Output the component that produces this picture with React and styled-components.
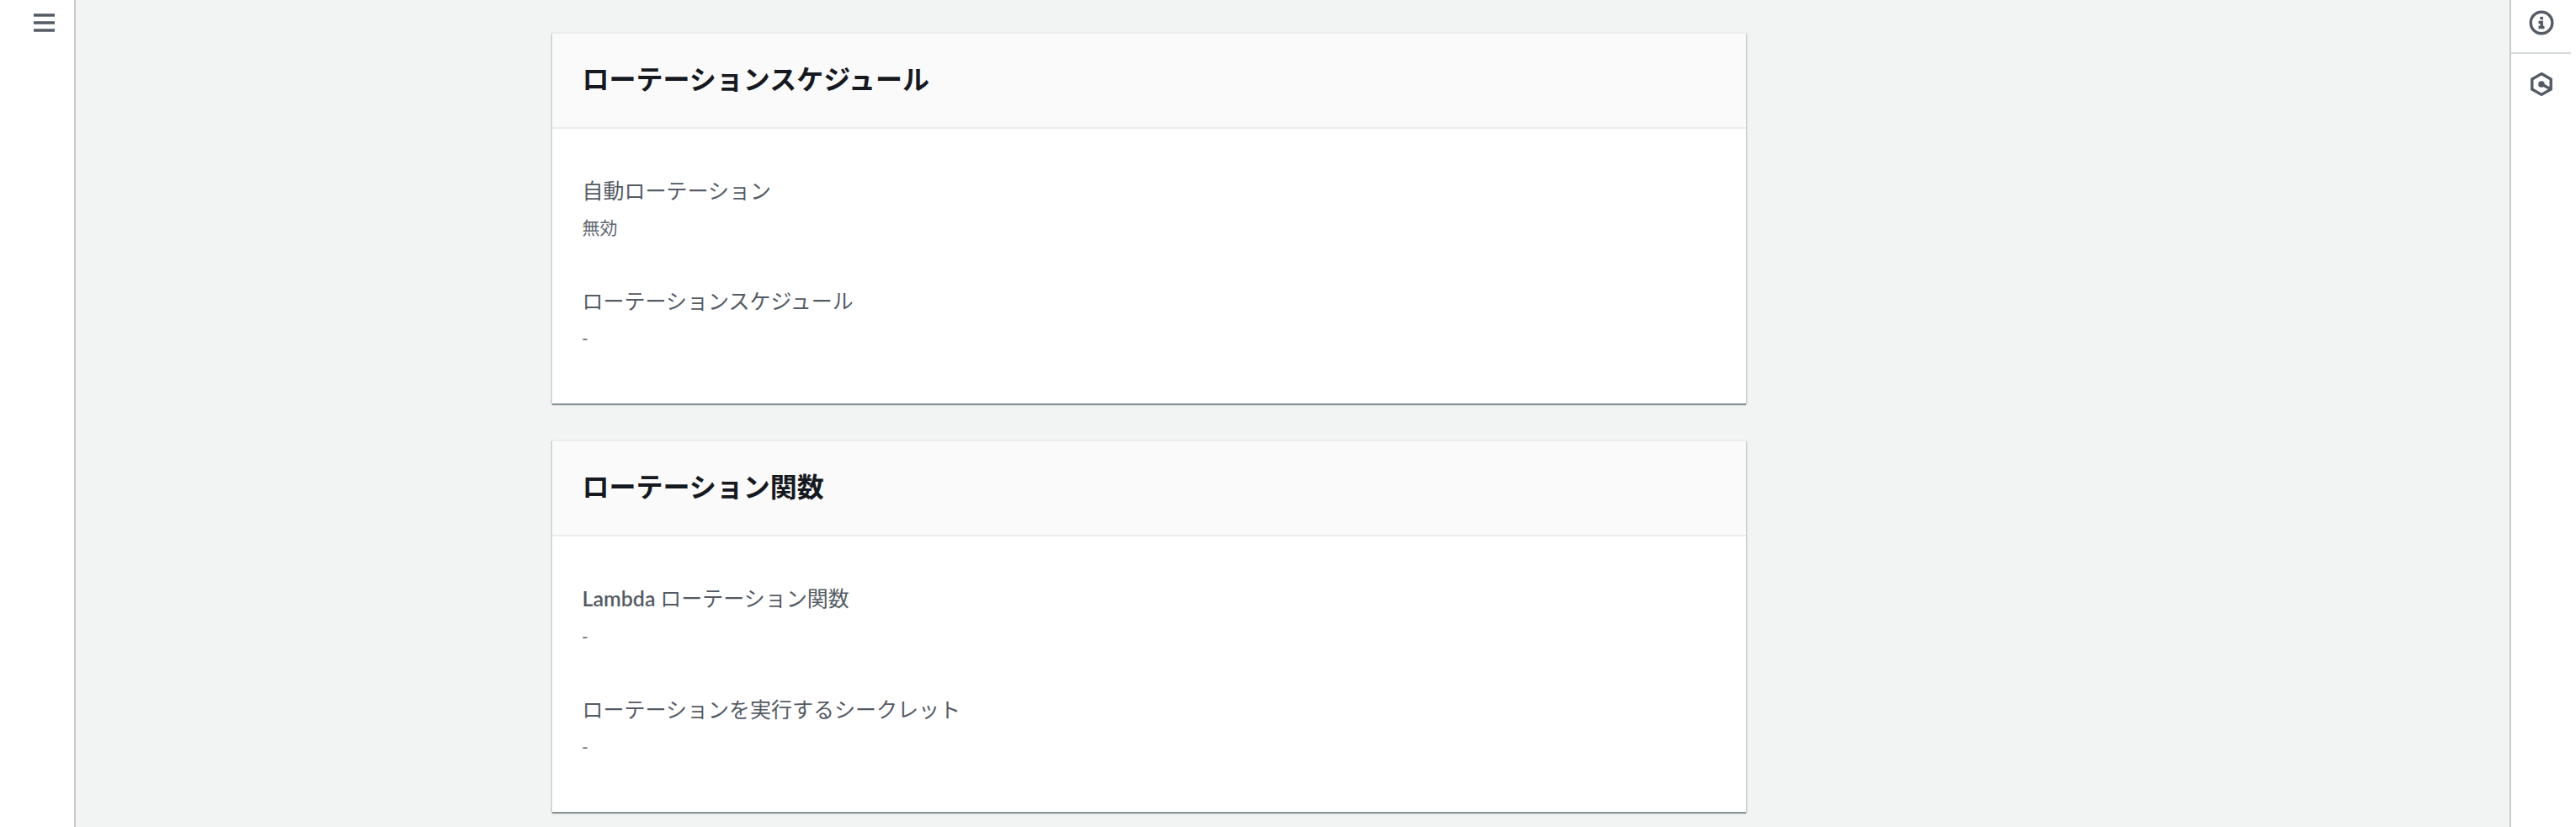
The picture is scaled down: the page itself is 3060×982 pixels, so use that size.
import React from "react";
import styled, { createGlobalStyle } from "styled-components";

const GlobalStyle = createGlobalStyle`
  *, *::before, *::after { box-sizing: border-box; }
  body {
    margin: 0;
    background: #f2f3f3;
    color: #545b64;
    font-family: "Open Sans", "Noto Sans CJK JP", sans-serif;
  }
`;

const Layout = styled.div`
  display: flex;
  min-height: 100vh;
`;

const NavRail = styled.nav`
  flex: none;
  width: 90px;
  padding: 4px 13px 0 0;
  display: flex;
  justify-content: flex-end;
  align-items: flex-start;
  background: #fff;
  border-right: 2px solid #c6cbcb;
`;

const ToolsRail = styled.aside`
  flex: none;
  width: 79px;
  padding-right: 6px;
  background: #fff;
  border-left: 2px solid #c6cbcb;
`;

const IconButton = styled.button`
  display: flex;
  align-items: center;
  justify-content: center;
  width: 45px;
  height: 45px;
  padding: 0;
  border: 0;
  background: none;
  color: #545b64;
  cursor: pointer;
`;

const ToolButton = styled(IconButton)`
  width: 100%;
  height: ${(p) => (p.$first ? 64 : 72)}px;
  padding-bottom: ${(p) => (p.$first ? 8 : 0)}px;
  border-bottom: ${(p) => (p.$first ? "2px solid #d5dbdb" : "0")};
`;

const Main = styled.main`
  flex: 1;
  padding: 39px 22px 18px 20px;
`;

const Content = styled.div`
  max-width: 1758px;
  margin: 0 auto;
  padding-right: 340px;
  display: flex;
  flex-direction: column;
  gap: 44px;
`;

const Card = styled.section`
  background: #fff;
  border-top: 1px solid #eaeded;
  box-shadow: 0 2px 1px #879596, 1px 1px 2px #c3c8ce, -1px 1px 2px #c3c8ce;
`;

const CardHeader = styled.header`
  padding: 32px 36px 39px;
  background: #fafafa;
  border-bottom: 2px solid #eaeded;
`;

const CardTitle = styled.h2`
  margin: 0;
  color: #16191f;
  font-family: "Noto Sans CJK JP", sans-serif;
  font-size: 32px;
  line-height: 40px;
  font-weight: 700;
`;

const Fields = styled.dl`
  margin: 0;
  padding: 52px 36px 60px;
  display: flex;
  flex-direction: column;
  gap: 48px;
`;

const Label = styled.dt`
  font-family: "Noto Sans CJK JP", sans-serif;
  font-size: 25px;
  line-height: 40px;
`;

const Latin = styled.span`
  font-family: Lato, sans-serif;
  font-weight: 600;
`;

const Value = styled.dd`
  margin: 7px 0 0;
  color: #5f6670;
  font-size: 21px;
  line-height: 36px;
`;

const MenuIcon = () => (
  <svg width="25" height="22" viewBox="0 0 25 22" stroke="currentColor" strokeWidth="3.6" aria-hidden="true">
    <path d="M0 2H25M0 11H25M0 20H25" />
  </svg>
);

const InfoIcon = () => (
  <svg width="30" height="30" viewBox="0 0 30 30" fill="none" stroke="currentColor" aria-hidden="true">
    <circle cx="15" cy="15" r="12.8" strokeWidth="3.4" />
    <path d="M13.3 9.6H17" strokeWidth="3.5" />
    <path d="M11.5 14.5H15.2V20.5M11.5 20.5H18.5" strokeWidth="3.5" />
  </svg>
);

const HexagonIcon = () => (
  <svg width="30" height="30" viewBox="0 0 30 30" fill="none" stroke="currentColor" strokeWidth="3.4" aria-hidden="true">
    <path d="M15 2.6L26.2 9V21L15 27.4L3.8 21V9Z" />
    <path d="M15 15L25.5 20.5" />
    <circle cx="15" cy="15" r="3.8" fill="currentColor" stroke="none" />
  </svg>
);

const cards = [
  {
    title: "ローテーションスケジュール",
    fields: [
      { label: "自動ローテーション", value: "無効" },
      { label: "ローテーションスケジュール", value: "-" },
    ],
  },
  {
    title: "ローテーション関数",
    fields: [
      { prefix: "Lambda", label: "ローテーション関数", value: "-" },
      { label: "ローテーションを実行するシークレット", value: "-" },
    ],
  },
];

export default function App() {
  return (
    <>
      <GlobalStyle />
      <Layout lang="ja">
        <NavRail>
          <IconButton type="button" aria-label="ナビゲーションを開く">
            <MenuIcon />
          </IconButton>
        </NavRail>
        <Main>
          <Content>
            {cards.map((card) => (
              <Card key={card.title}>
                <CardHeader>
                  <CardTitle>{card.title}</CardTitle>
                </CardHeader>
                <Fields>
                  {card.fields.map(({ prefix, label, value }) => (
                    <div key={label}>
                      <Label>
                        {prefix && <Latin>{prefix}</Latin>}
                        {prefix && " "}
                        {label}
                      </Label>
                      <Value>{value}</Value>
                    </div>
                  ))}
                </Fields>
              </Card>
            ))}
          </Content>
        </Main>
        <ToolsRail>
          <ToolButton type="button" $first aria-label="情報">
            <InfoIcon />
          </ToolButton>
          <ToolButton type="button" aria-label="ツール">
            <HexagonIcon />
          </ToolButton>
        </ToolsRail>
      </Layout>
    </>
  );
}
